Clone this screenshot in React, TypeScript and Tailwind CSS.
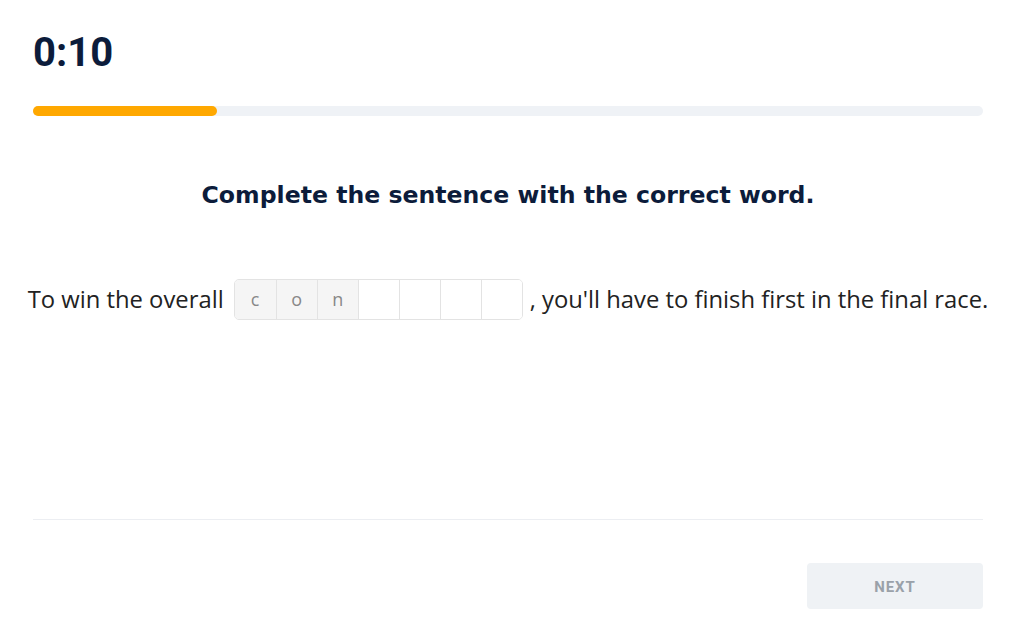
import React from 'react';

const letters = ['c', 'o', 'n', '', '', '', ''];

const App: React.FC = () => {
  return (
    <div className="min-h-[634px] w-full bg-white pl-[33px] pr-[30px] pt-[30px]">
      {/* Timer */}
      <div
        className="text-[40px] font-bold leading-[46px] text-[#0c1c3b]"
        style={{ fontFamily: 'Roboto, "Liberation Sans", sans-serif' }}
      >
        0:10
      </div>

      {/* Progress */}
      <div className="mt-[30px] h-[10px] w-full rounded-full bg-[#eff2f6]">
        <div className="h-full w-[19.4%] rounded-full bg-[#ffa800]"></div>
      </div>

      {/* Prompt */}
      <h2
        className="mt-[63px] text-center text-[23.6px] font-bold leading-[32px] text-[#0c1c3b]"
        style={{ fontFamily: '"DejaVu Sans", Roboto, sans-serif' }}
      >
        Complete the sentence with the correct word.
      </h2>

      <div
        className="mt-[68px] flex items-center justify-center whitespace-nowrap text-[23.8px] text-[#222]"
        style={{ fontFamily: '"Open Sans", "Noto Sans", sans-serif' }}
      >
        <span className="shrink-0">To win the overall</span>
        <div className="ml-[10px] mr-[7px] flex h-[41px] shrink-0 overflow-hidden rounded-[5px] border border-[#e3e3e3]">
          {letters.map((l, i) => (
            <div
              key={i}
              className={`flex w-[41px] shrink-0 items-center justify-center text-[18px] text-[#888] ${
                i > 0 ? 'border-l border-[#e3e3e3]' : ''
              } ${l ? 'bg-[#f5f5f5]' : 'bg-white'}`}
            >
              {l}
            </div>
          ))}
        </div>
        <span className="shrink-0">, you'll have to finish first in the final race.</span>
      </div>

      {/* Footer */}
      <div className="mt-[199px] h-px w-full bg-[#eceef2]"></div>
      <div className="mt-[43px] flex justify-end">
        <button
          className="h-[46px] w-[176px] rounded-[4px] bg-[#eff2f5] pt-[2px] text-[15px] font-bold tracking-[0.06em] text-[#9aa1a9]"
          style={{ fontFamily: 'Roboto, "Liberation Sans", sans-serif' }}
        >
          NEXT
        </button>
      </div>
    </div>
  );
};

export default App;
